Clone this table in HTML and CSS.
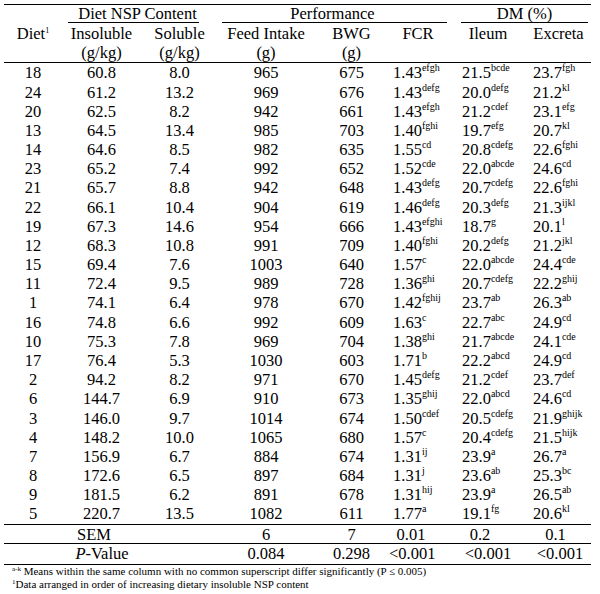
FILE: index.html
```html
<!DOCTYPE html>
<html lang="en">
<head>
<meta charset="utf-8">
<title>Diet NSP table</title>
<link rel="stylesheet" href="styles.css">
</head>
<body>
<div class="wrap">
<table class="tbl">
  <colgroup>
    <col class="c-diet"><col class="c-ins"><col class="c-sol"><col class="c-feed"><col class="c-bwg"><col class="c-fcr"><col class="c-ile"><col class="c-exc">
  </colgroup>
  <thead>
    <tr class="grp">
      <th rowspan="2" class="diet-h">Diet<sup class="hsup">1</sup></th>
      <th colspan="2"><span class="ul ul-nsp">Diet NSP Content</span></th>
      <th colspan="3"><span class="ul ul-perf">Performance</span></th>
      <th colspan="2"><span class="ul ul-dm">DM (%)</span></th>
    </tr>
    <tr class="sub">
      <th>Insoluble<br>(g/kg)</th>
      <th>Soluble<br>(g/kg)</th>
      <th>Feed Intake<br>(g)</th>
      <th>BWG<br>(g)</th>
      <th>FCR</th>
      <th>Ileum</th>
      <th class="last">Excreta</th>
    </tr>
  </thead>
  <tbody class="data">
    <tr><td>18</td><td>60.8</td><td>8.0</td><td>965</td><td>675</td><td class="l1">1.43<sup>efgh</sup></td><td class="l2">21.5<sup>bcde</sup></td><td class="l3">23.7<sup>fgh</sup></td></tr>
    <tr><td>24</td><td>61.2</td><td>13.2</td><td>969</td><td>676</td><td class="l1">1.43<sup>defg</sup></td><td class="l2">20.0<sup>defg</sup></td><td class="l3">21.2<sup>kl</sup></td></tr>
    <tr><td>20</td><td>62.5</td><td>8.2</td><td>942</td><td>661</td><td class="l1">1.43<sup>efgh</sup></td><td class="l2">21.2<sup>cdef</sup></td><td class="l3">23.1<sup>efg</sup></td></tr>
    <tr><td>13</td><td>64.5</td><td>13.4</td><td>985</td><td>703</td><td class="l1">1.40<sup>fghi</sup></td><td class="l2">19.7<sup>efg</sup></td><td class="l3">20.7<sup>kl</sup></td></tr>
    <tr><td>14</td><td>64.6</td><td>8.5</td><td>982</td><td>635</td><td class="l1">1.55<sup>cd</sup></td><td class="l2">20.8<sup>cdefg</sup></td><td class="l3">22.6<sup>fghi</sup></td></tr>
    <tr><td>23</td><td>65.2</td><td>7.4</td><td>992</td><td>652</td><td class="l1">1.52<sup>cde</sup></td><td class="l2">22.0<sup>abcde</sup></td><td class="l3">24.6<sup>cd</sup></td></tr>
    <tr><td>21</td><td>65.7</td><td>8.8</td><td>942</td><td>648</td><td class="l1">1.43<sup>defg</sup></td><td class="l2">20.7<sup>cdefg</sup></td><td class="l3">22.6<sup>fghi</sup></td></tr>
    <tr><td>22</td><td>66.1</td><td>10.4</td><td>904</td><td>619</td><td class="l1">1.46<sup>defg</sup></td><td class="l2">20.3<sup>defg</sup></td><td class="l3">21.3<sup>ijkl</sup></td></tr>
    <tr><td>19</td><td>67.3</td><td>14.6</td><td>954</td><td>666</td><td class="l1">1.43<sup>efghi</sup></td><td class="l2">18.7<sup>g</sup></td><td class="l3">20.1<sup>l</sup></td></tr>
    <tr><td>12</td><td>68.3</td><td>10.8</td><td>991</td><td>709</td><td class="l1">1.40<sup>fghi</sup></td><td class="l2">20.2<sup>defg</sup></td><td class="l3">21.2<sup>jkl</sup></td></tr>
    <tr><td>15</td><td>69.4</td><td>7.6</td><td>1003</td><td>640</td><td class="l1">1.57<sup>c</sup></td><td class="l2">22.0<sup>abcde</sup></td><td class="l3">24.4<sup>cde</sup></td></tr>
    <tr><td>11</td><td>72.4</td><td>9.5</td><td>989</td><td>728</td><td class="l1">1.36<sup>ghi</sup></td><td class="l2">20.7<sup>cdefg</sup></td><td class="l3">22.2<sup>ghij</sup></td></tr>
    <tr><td>1</td><td>74.1</td><td>6.4</td><td>978</td><td>670</td><td class="l1">1.42<sup>fghij</sup></td><td class="l2">23.7<sup>ab</sup></td><td class="l3">26.3<sup>ab</sup></td></tr>
    <tr><td>16</td><td>74.8</td><td>6.6</td><td>992</td><td>609</td><td class="l1">1.63<sup>c</sup></td><td class="l2">22.7<sup>abc</sup></td><td class="l3">24.9<sup>cd</sup></td></tr>
    <tr><td>10</td><td>75.3</td><td>7.8</td><td>969</td><td>704</td><td class="l1">1.38<sup>ghi</sup></td><td class="l2">21.7<sup>abcde</sup></td><td class="l3">24.1<sup>cde</sup></td></tr>
    <tr><td>17</td><td>76.4</td><td>5.3</td><td>1030</td><td>603</td><td class="l1">1.71<sup>b</sup></td><td class="l2">22.2<sup>abcd</sup></td><td class="l3">24.9<sup>cd</sup></td></tr>
    <tr><td>2</td><td>94.2</td><td>8.2</td><td>971</td><td>670</td><td class="l1">1.45<sup>defg</sup></td><td class="l2">21.2<sup>cdef</sup></td><td class="l3">23.7<sup>def</sup></td></tr>
    <tr><td>6</td><td>144.7</td><td>6.9</td><td>910</td><td>673</td><td class="l1">1.35<sup>ghij</sup></td><td class="l2">22.0<sup>abcd</sup></td><td class="l3">24.6<sup>cd</sup></td></tr>
    <tr><td>3</td><td>146.0</td><td>9.7</td><td>1014</td><td>674</td><td class="l1">1.50<sup>cdef</sup></td><td class="l2">20.5<sup>cdefg</sup></td><td class="l3">21.9<sup>ghijk</sup></td></tr>
    <tr><td>4</td><td>148.2</td><td>10.0</td><td>1065</td><td>680</td><td class="l1">1.57<sup>c</sup></td><td class="l2">20.4<sup>cdefg</sup></td><td class="l3">21.5<sup>hijk</sup></td></tr>
    <tr><td>7</td><td>156.9</td><td>6.7</td><td>884</td><td>674</td><td class="l1">1.31<sup>ij</sup></td><td class="l2">23.9<sup>a</sup></td><td class="l3">26.7<sup>a</sup></td></tr>
    <tr><td>8</td><td>172.6</td><td>6.5</td><td>897</td><td>684</td><td class="l1">1.31<sup>j</sup></td><td class="l2">23.6<sup>ab</sup></td><td class="l3">25.3<sup>bc</sup></td></tr>
    <tr><td>9</td><td>181.5</td><td>6.2</td><td>891</td><td>678</td><td class="l1">1.31<sup>hij</sup></td><td class="l2">23.9<sup>a</sup></td><td class="l3">26.5<sup>ab</sup></td></tr>
    <tr class="lastrow"><td>5</td><td>220.7</td><td>13.5</td><td>1082</td><td>611</td><td class="l1">1.77<sup>a</sup></td><td class="l2">19.1<sup>fg</sup></td><td class="l3">20.6<sup>kl</sup></td></tr>
  </tbody>
  <tbody class="stats">
    <tr class="sem"><td colspan="3" class="lbl-sem">SEM</td><td>6</td><td>7</td><td class="s-fcr">0.01</td><td class="s-ile">0.2</td><td class="s-exc">0.1</td></tr>
    <tr class="pv"><td colspan="3" class="lbl-pv"><i>P</i>-Value</td><td>0.084</td><td>0.298</td><td class="s-fcr">&lt;0.001</td><td>&lt;0.001</td><td class="s-exc2">&lt;0.001</td></tr>
  </tbody>
</table>
<div class="notes">
  <p><sup class="nsup">a-k</sup> Means within the same column with no common superscript differ significantly (P ≤ 0.005)</p>
  <p><sup class="nsup">1</sup>Data arranged in order of increasing dietary insoluble NSP content</p>
</div>
</div>
</body>
</html>
```

FILE: styles.css
```css
html, body {
  margin: 0;
  padding: 0;
  background: #fff;
}

body {
  font-family: "Liberation Serif", "Times New Roman", serif;
  color: #000;
}

.wrap {
  padding: 4px 0 0 4px;
}

.tbl {
  table-layout: fixed;
  width: 587px;
  border-collapse: separate;
  border-spacing: 0;
  border-top: 1px solid #000;
  border-bottom: 1px solid #000;
  font-size: 16.5px;
}

.c-diet { width: 58px; }
.c-ins { width: 79px; }
.c-sol { width: 77px; }
.c-feed { width: 96px; }
.c-bwg { width: 75px; }
.c-fcr { width: 58px; }
.c-ile { width: 82px; }
.c-exc { width: 62px; }

th, td {
  padding: 0;
  font-weight: normal;
  text-align: center;
  white-space: nowrap;
}

.grp th {
  padding-top: 1px;
  vertical-align: top;
}

.ul {
  display: block;
  line-height: 16px;
  border-bottom: 1px solid #000;
}

.ul-nsp { margin: 0 19px 0 6px; padding-left: 8px; }
.ul-perf { margin: 0 0 0 4px; padding-right: 4px; }
.ul-dm { margin: 0 3px 0 14px; }

.grp th.diet-h {
  vertical-align: middle;
  padding-top: 0;
  line-height: 19.2px;
  border-bottom: 1px solid #000;
}

.hsup {
  font-size: 8px;
  line-height: 0;
  vertical-align: 6px;
}

.sub th {
  padding-top: 1px;
  line-height: 19.2px;
  height: 38.4px;
  vertical-align: top;
  border-bottom: 1px solid #000;
}

.sub th.last { padding-right: 3px; }

.data td {
  line-height: 19.17px;
}

.data td.l1, .data td.l2, .data td.l3 {
  text-align: left;
}

.data td.l1 { padding-left: 4px; }
.data td.l2 { padding-left: 15px; }
.data td.l3 { padding-left: 4px; }

.data sup {
  font-size: 10px;
  line-height: 0;
  vertical-align: 7px;
}

.lastrow td {
  border-bottom: 1px solid #000;
}

.sem td {
  padding-top: 1px;
  line-height: 17px;
  border-bottom: 1px solid #000;
}

.pv td {
  line-height: 20px;
}

.stats td.lbl-sem { padding-right: 34px; }
.stats td.lbl-pv { padding-right: 18px; }
.stats td.s-fcr { padding-right: 14px; }
.stats td.s-ile { padding-right: 16px; }
.stats td.s-exc { padding-right: 9px; }
.stats td.s-exc2 { padding-right: 0; }

.notes {
  padding-left: 8px;
  font-size: 11px;
  line-height: 13.3px;
}

.notes p {
  margin: 0;
}

.nsup {
  font-size: 7px;
  line-height: 0;
  vertical-align: 4px;
}
```
